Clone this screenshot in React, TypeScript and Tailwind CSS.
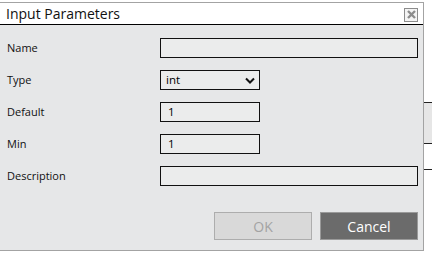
const fields = [
  { label: "Name", kind: "wide" },
  { label: "Type", kind: "select", value: "int" },
  { label: "Default", kind: "short", value: "1" },
  { label: "Min", kind: "short", value: "1" },
  { label: "Description", kind: "wide" },
];

function Field({ kind, value }: { kind: string; value?: string }) {
  if (kind === "select") {
    return (
      <div className="flex h-[20px] w-[100px] items-center justify-between border border-[#111] bg-[#ebecec] pl-[5px] pr-[4px] text-[11.5px] text-black">
        <span>{value}</span>
        <svg width="10" height="7" viewBox="0 0 10 7">
          <path d="M1 1.5 L5 5.5 L9 1.5" fill="none" stroke="#111" strokeWidth="2" />
        </svg>
      </div>
    );
  }
  return (
    <div
      className={
        (kind === "wide" ? "w-[258px]" : "w-[100px]") +
        " flex h-[20px] items-center border border-[#111] bg-[#ebecec] pl-[7px] text-[11.5px] text-black"
      }
    >
      {value}
    </div>
  );
}

export default function App() {
  return (
    <div className="relative h-[253px] w-[432px] overflow-hidden bg-white font-['Open_Sans',sans-serif]">
      {/* page content behind the dialog */}
      <div className="absolute left-[424px] top-[102px] h-[42px] w-[20px] border-y border-[#222] bg-[#e6e6e6]" />
      <div className="absolute left-[424px] top-[169px] h-px w-[20px] bg-[#222]" />

      <div className="relative ml-[-1px] mt-[2px] flex h-[249px] w-[425px] flex-col border border-[#a3a3a3] bg-[#e6e7e8]">
        <div className="flex h-[22px] items-center justify-between border-b border-black bg-white pl-[6px] pr-[5px]">
          <span className="text-[14px] leading-none text-[#111]">Input Parameters</span>
          <div className="mt-[2px] flex h-[14px] w-[14px] items-center justify-center border border-[#8c8c8c] bg-[#f4f4f4]">
            <svg width="9" height="9" viewBox="0 0 9 9">
              <path d="M1 1 L8 8 M8 1 L1 8" stroke="#8c8c8c" strokeWidth="2.4" />
            </svg>
          </div>
        </div>

        <div className="flex flex-col gap-[12px] pl-[7px] pr-[5px] pt-[13px]">
          {fields.map((f) => (
            <div key={f.label} className="grid h-[20px] grid-cols-[153px_1fr] items-center">
              <span className="text-[11px] text-[#111]">{f.label}</span>
              <Field kind={f.kind} value={f.value} />
            </div>
          ))}
        </div>

        <div className="mt-[26px] flex justify-end gap-[8px] pr-[5px]">
          <button className="h-[28px] w-[98px] border border-[#adadad] bg-[#d9d9d9] text-[14px] text-[#a3a3a3]">
            OK
          </button>
          <button className="h-[28px] w-[98px] border border-[#9a9a9a] bg-[#6b6b6b] text-[14px] text-white">
            Cancel
          </button>
        </div>
      </div>
    </div>
  );
}
